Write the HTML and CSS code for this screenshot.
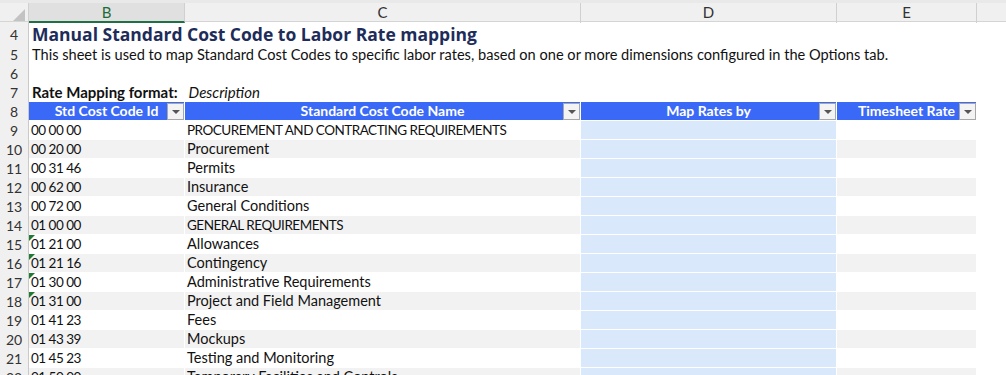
FILE: index.html
```html
<html>
	<head>
		<title>Labor Rate mapping</title>
		<link rel="stylesheet" href="styles.css">
	</head>
	<body>
		<div class="sheet">
			<div class="heads">
				<div class="corner"><span class="tri"></span></div>
				<div class="colhead sel">B</div>
				<div class="colhead">C</div>
				<div class="colhead">D</div>
				<div class="colhead">E</div>
				<div class="colhead last"></div>
			</div>

			<div class="row tall">
				<div class="rh">4</div>
				<div class="free title">Manual Standard Cost Code to Labor Rate mapping</div>
			</div>
			<div class="row">
				<div class="rh">5</div>
				<div class="free note">This sheet is used to map Standard Cost Codes to specific labor rates, based on one or more dimensions configured in the Options tab.</div>
			</div>
			<div class="row">
				<div class="rh">6</div>
				<div class="free"></div>
			</div>
			<div class="row">
				<div class="rh">7</div>
				<div class="free"><b>Rate Mapping format:</b><i class="fmt">Description</i></div>
			</div>

			<div class="row thead">
				<div class="rh">8</div>
				<div class="th">Std Cost Code Id<span class="drop"></span></div>
				<div class="th">Standard Cost Code Name<span class="drop"></span></div>
				<div class="th">Map Rates by<span class="drop"></span></div>
				<div class="th">Timesheet Rate<span class="drop"></span></div>
			</div>

			<div class="row">
				<div class="rh">9</div>
				<div class="td code">00 00 00</div>
				<div class="td caps">PROCUREMENT AND CONTRACTING REQUIREMENTS</div>
				<div class="td map"></div>
				<div class="td"></div>
			</div>
			<div class="row band">
				<div class="rh">10</div>
				<div class="td code">00 20 00</div>
				<div class="td">Procurement</div>
				<div class="td map"></div>
				<div class="td"></div>
			</div>
			<div class="row">
				<div class="rh">11</div>
				<div class="td code">00 31 46</div>
				<div class="td">Permits</div>
				<div class="td map"></div>
				<div class="td"></div>
			</div>
			<div class="row band">
				<div class="rh">12</div>
				<div class="td code">00 62 00</div>
				<div class="td">Insurance</div>
				<div class="td map"></div>
				<div class="td"></div>
			</div>
			<div class="row">
				<div class="rh">13</div>
				<div class="td code">00 72 00</div>
				<div class="td">General Conditions</div>
				<div class="td map"></div>
				<div class="td"></div>
			</div>
			<div class="row band">
				<div class="rh">14</div>
				<div class="td code">01 00 00</div>
				<div class="td caps">GENERAL REQUIREMENTS</div>
				<div class="td map"></div>
				<div class="td"></div>
			</div>
			<div class="row">
				<div class="rh">15</div>
				<div class="td code flag">01 21 00</div>
				<div class="td">Allowances</div>
				<div class="td map"></div>
				<div class="td"></div>
			</div>
			<div class="row band">
				<div class="rh">16</div>
				<div class="td code flag">01 21 16</div>
				<div class="td">Contingency</div>
				<div class="td map"></div>
				<div class="td"></div>
			</div>
			<div class="row">
				<div class="rh">17</div>
				<div class="td code flag">01 30 00</div>
				<div class="td">Administrative Requirements</div>
				<div class="td map"></div>
				<div class="td"></div>
			</div>
			<div class="row band">
				<div class="rh">18</div>
				<div class="td code flag">01 31 00</div>
				<div class="td">Project and Field Management</div>
				<div class="td map"></div>
				<div class="td"></div>
			</div>
			<div class="row">
				<div class="rh">19</div>
				<div class="td code">01 41 23</div>
				<div class="td">Fees</div>
				<div class="td map"></div>
				<div class="td"></div>
			</div>
			<div class="row band">
				<div class="rh">20</div>
				<div class="td code">01 43 39</div>
				<div class="td">Mockups</div>
				<div class="td map"></div>
				<div class="td"></div>
			</div>
			<div class="row">
				<div class="rh">21</div>
				<div class="td code">01 45 23</div>
				<div class="td">Testing and Monitoring</div>
				<div class="td map"></div>
				<div class="td"></div>
			</div>
			<div class="row band">
				<div class="rh">22</div>
				<div class="td code">01 50 00</div>
				<div class="td">Temporary Facilities and Controls</div>
				<div class="td map"></div>
				<div class="td"></div>
			</div>
		</div>
	</body>
</html>
```

FILE: styles.css
```css
body { margin:0; background:#fff; font-family:Lato, "Liberation Sans", sans-serif; color:#111; overflow:hidden; }

.sheet { width:1006px; }

.heads, .row {
	display:grid;
	grid-template-columns: 29px 156px 396px 256px 140px 1fr;
}

.heads { height:22px; box-sizing:border-box; border-top:3px solid #e9e9e9; background:#f0f0f0; border-bottom:1px solid #d5d5d5; }
.corner { position:relative; border-right:1px solid #d0d0d0; }
.corner .tri { position:absolute; right:3px; bottom:2px; width:0; height:0; border-left:12px solid transparent; border-bottom:12px solid #c3c3c3; }
.colhead { border-right:1px solid #d0d0d0; font-size:15px; line-height:18px; text-align:center; color:#333; }
.colhead.sel { background:#e0e0e0; color:#1d6b3a; border-bottom:2px solid #1e7145; }
.colhead.last { border-right:none; }

.row { height:19px; }
.row.tall { height:23px; }

.rh { background:#f0f0f0; border-right:1px solid #c9c9c9; font-size:14px; line-height:19px; text-align:center; color:#333; }
.tall .rh { line-height:25px; }

.free { grid-column: 2 / -1; white-space:nowrap; font-size:15px; line-height:19px; padding-left:3px; }
.free.note { font-size:14.6px; }
.title { font-family:"Open Sans", sans-serif; font-weight:bold; font-size:17.5px; line-height:24px; color:#1e2c5a; padding-left:3px; }
.fmt { margin-left:11px; }

.th, .td { position:relative; box-sizing:border-box; border-right:1px solid #fff; border-bottom:1px solid #fff; white-space:nowrap; font-size:14.5px; line-height:18px; }
.th { background:#3b69f7; color:#fff; font-weight:bold; text-align:center; font-size:14px; }
.td { padding-left:2px; }
.td.code, .td.caps { font-size:13.5px; letter-spacing:-0.5px; }
.band .td { background:#f2f2f2; }
.td.map, .band .td.map { background:#dae8fc; }

.drop { position:absolute; right:0; top:1px; width:17px; height:17px; box-sizing:border-box; background:#f3f3f3; border:1px solid #a7a7a7; }
.drop::after { content:""; position:absolute; left:4px; top:6px; border-left:4px solid transparent; border-right:4px solid transparent; border-top:4px solid #555; }

.flag::before { content:""; position:absolute; left:0; top:0; border-top:6px solid #1f7a33; border-right:6px solid transparent; }
```
